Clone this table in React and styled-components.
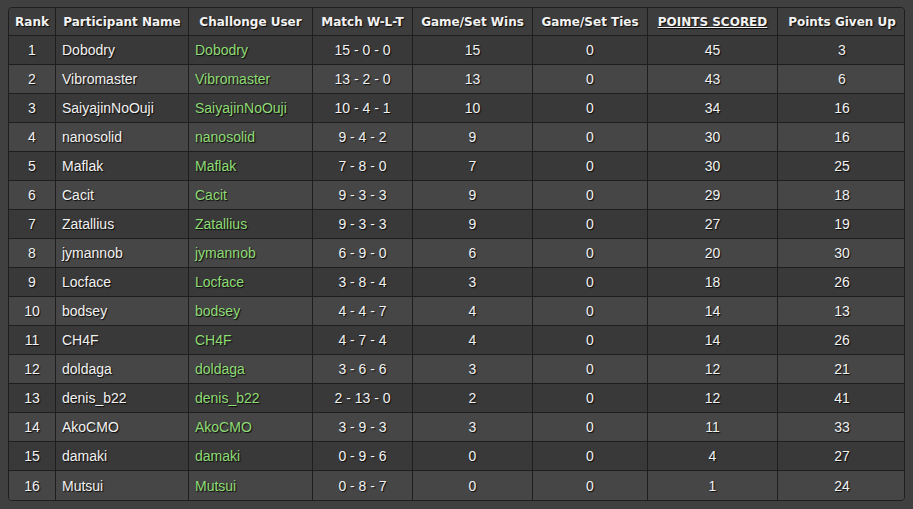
import React from "react";
import styled, { createGlobalStyle } from "styled-components";

const Global = createGlobalStyle`
  html, body { margin: 0; padding: 0; }
  body {
    background: #404040;
    font-family: "Liberation Sans", Arial, sans-serif;
  }
`;

const Page = styled.div`
  padding: 7px 8px 0 8px;
`;

const Table = styled.div`
  display: grid;
  grid-template-columns: 47px 133px 124px 100px 120px 115px 130px 128px;
  width: 897px;
  box-sizing: border-box;
  border: 1px solid #1e1e1e;
  border-radius: 4px;
  overflow: hidden;
`;

const Row = styled.div`
  display: contents;
`;

const Cell = styled.div`
  box-sizing: border-box;
  height: ${(p) => (p.$head ? "28px" : "29px")};
  display: flex;
  align-items: center;
  justify-content: ${(p) => (p.$left ? "flex-start" : "center")};
  padding: ${(p) => (p.$left ? "0 0 0 6px" : "0")};
  border-right: ${(p) => (p.$last ? "none" : "1px solid #1e1e1e")};
  border-bottom: ${(p) => (p.$bottom ? "none" : "1px solid #1e1e1e")};
  background: ${(p) => (p.$head ? "#3d3d3d" : p.$odd ? "#393939" : "#464646")};
  color: ${(p) => (p.$green ? "#8edc76" : "#f2f2f2")};
  font-size: 14px;
  text-shadow: 1px 1px 1px #0b0b0b;
  white-space: nowrap;
`;

const HeadCell = styled(Cell)`
  font-family: "DejaVu Sans", Verdana, sans-serif;
  font-weight: bold;
  font-size: 12px;
  justify-content: center;
  padding: 0;
  text-decoration: ${(p) => (p.$sorted ? "underline" : "none")};
`;

const headers = [
  "Rank",
  "Participant Name",
  "Challonge User",
  "Match W-L-T",
  "Game/Set Wins",
  "Game/Set Ties",
  "POINTS SCORED",
  "Points Given Up",
];

const data = [
  ["Dobodry", "15 - 0 - 0", 15, 45, 3],
  ["Vibromaster", "13 - 2 - 0", 13, 43, 6],
  ["SaiyajinNoOuji", "10 - 4 - 1", 10, 34, 16],
  ["nanosolid", "9 - 4 - 2", 9, 30, 16],
  ["Maflak", "7 - 8 - 0", 7, 30, 25],
  ["Cacit", "9 - 3 - 3", 9, 29, 18],
  ["Zatallius", "9 - 3 - 3", 9, 27, 19],
  ["jymannob", "6 - 9 - 0", 6, 20, 30],
  ["Locface", "3 - 8 - 4", 3, 18, 26],
  ["bodsey", "4 - 4 - 7", 4, 14, 13],
  ["CH4F", "4 - 7 - 4", 4, 14, 26],
  ["doldaga", "3 - 6 - 6", 3, 12, 21],
  ["denis_b22", "2 - 13 - 0", 2, 12, 41],
  ["AkoCMO", "3 - 9 - 3", 3, 11, 33],
  ["damaki", "0 - 9 - 6", 0, 4, 27],
  ["Mutsui", "0 - 8 - 7", 0, 1, 24],
];

export default function App() {
  return (
    <>
      <Global />
      <Page>
        <Table>
          <Row>
            {headers.map((h, i) => (
              <HeadCell key={h} $head $last={i === 7} $sorted={i === 6}>
                {h}
              </HeadCell>
            ))}
          </Row>
          {data.map(([name, wlt, wins, pts, given], r) => {
            const odd = r % 2 === 0;
            const bottom = r === data.length - 1;
            const common = { $odd: odd, $bottom: bottom };
            return (
              <Row key={name}>
                <Cell {...common}>{r + 1}</Cell>
                <Cell {...common} $left>{name}</Cell>
                <Cell {...common} $left $green>{name}</Cell>
                <Cell {...common}>{wlt}</Cell>
                <Cell {...common}>{wins}</Cell>
                <Cell {...common}>0</Cell>
                <Cell {...common}>{pts}</Cell>
                <Cell {...common} $last>{given}</Cell>
              </Row>
            );
          })}
        </Table>
      </Page>
    </>
  );
}
